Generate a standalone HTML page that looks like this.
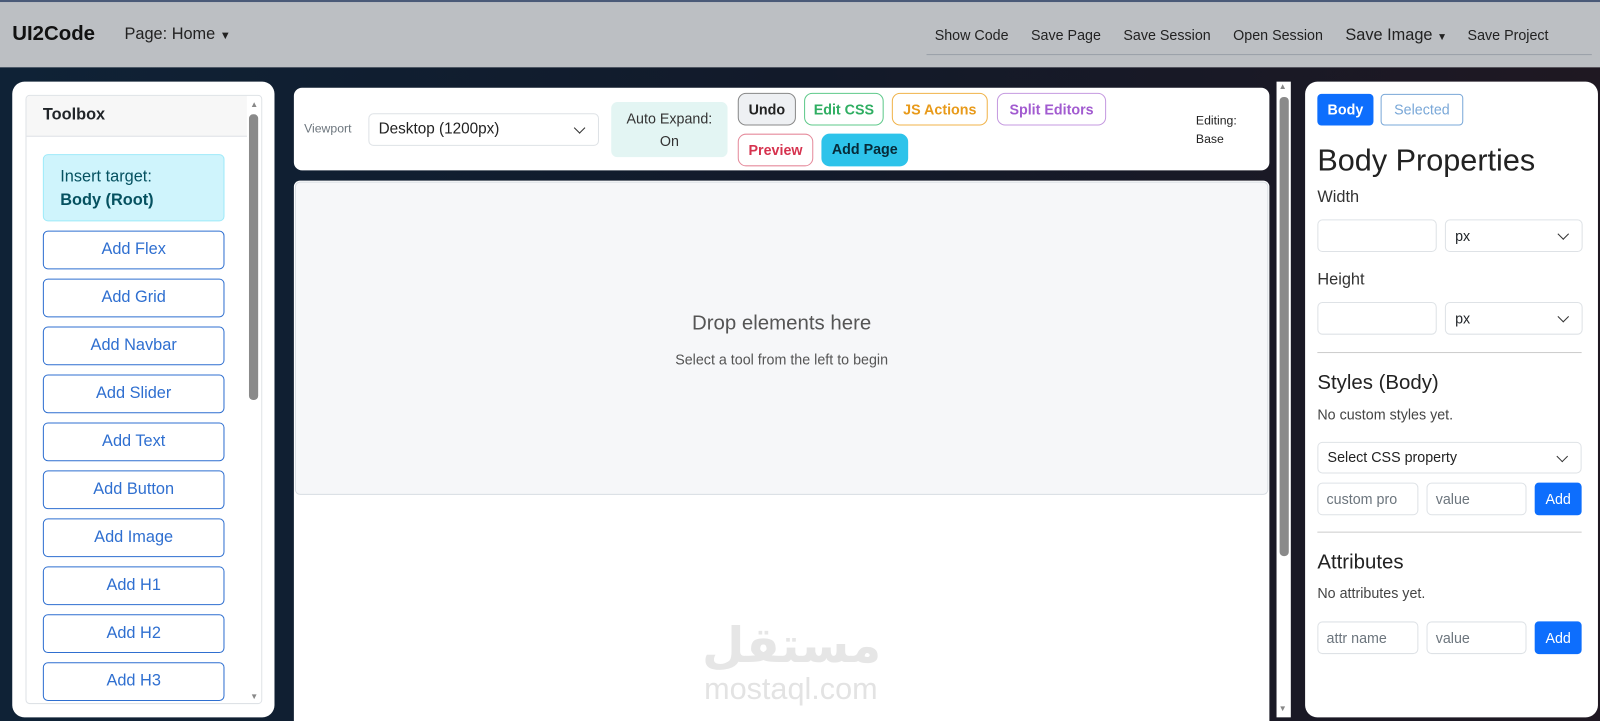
<!DOCTYPE html>
<html><head><style>
*{box-sizing:border-box;margin:0;padding:0}
html,body{width:1600px;height:719px;overflow:hidden}
body{font-family:"Liberation Sans",sans-serif;background:linear-gradient(90deg,#0f2236 0%,#121a2a 50%,#1f1822 100%);color:#212529}
#w{position:absolute;left:0;top:0;width:1568px;height:705px;transform:scale(1.020408);transform-origin:0 0}
.nav{position:absolute;left:0;top:0;width:1568px;height:66px;background:#bcbfc3;border-top:2px solid #4a5a78}
.abs{position:absolute}
.panel{position:absolute;background:#fff;border-radius:12px}
.btn{position:absolute;left:42px;width:178px;height:38px;border:1px solid #2f6fd0;border-radius:5px;color:#2f6fd0;font-size:16px;text-align:center;line-height:36px}
.tb{position:absolute;border-radius:8px;font-size:14px;font-weight:bold;text-align:center;height:32px;line-height:30px}
.inp{position:absolute;border:1px solid #dee2e6;border-radius:5px;height:32px;font-size:14px;color:#6c757d;padding-left:8px;line-height:30px;background:#fff}
.sel{position:absolute;border:1px solid #dee2e6;border-radius:5px;background:#fff;font-size:14px;padding-left:9px}
.chev{position:absolute;right:14px;top:50%;width:8px;height:8px;border-right:1.6px solid #333;border-bottom:1.6px solid #333;transform:translateY(-70%) rotate(45deg)}
</style></head><body><div id="w">
<div class="nav">
<div class="abs" style="left:12px;top:20px;font-size:20px;font-weight:bold;color:#111">UI2Code</div>
<div class="abs" style="left:122px;top:23px;font-size:16px;color:#222">Page: Home <span style="font-size:11px">▼</span></div>
<div class="abs" style="left:916px;top:24px;font-size:14px;color:#222;white-space:nowrap">
<span>Show Code</span><span style="margin-left:22px">Save Page</span><span style="margin-left:22px">Save Session</span><span style="margin-left:22px">Open Session</span><span style="margin-left:22px;font-size:16px">Save Image <span style="font-size:10px">▼</span></span><span style="margin-left:20px">Save Project</span></div>
<div class="abs" style="left:908px;top:51px;width:652px;height:1px;background:#9aa0a8"></div>
</div>

<div class="panel" style="left:12px;top:80px;width:257px;height:623px">
<div class="abs" style="left:13px;top:13px;width:232px;height:597px;border:1px solid #dee2e6;border-radius:4px;overflow:hidden">
<div style="height:40px;background:#f7f7f7;border-bottom:1px solid #dee2e6;width:218px;padding:10px 16px;font-weight:bold;font-size:16px">Toolbox</div>
<div class="abs" style="right:0;top:0;width:14px;height:597px;background:#fff"></div>
<div class="abs" style="right:3px;top:4px;font-size:8px;color:#888">▲</div>
<div class="abs" style="right:3px;top:18px;width:9px;height:280px;background:#8a8a8a;border-radius:4px"></div>
<div class="abs" style="right:3px;bottom:2px;font-size:8px;color:#888">▼</div>
</div>
<div class="abs" style="left:30px;top:71px;width:178px;height:66px;background:#cff4fc;border:1px solid #9eeaf9;border-radius:5px;padding:10px 16px;color:#055160;font-size:16px;line-height:23px">Insert target:<br><b>Body (Root)</b></div>
</div>
<div class="btn" style="top:226px">Add Flex</div>
<div class="btn" style="top:273px">Add Grid</div>
<div class="btn" style="top:320px">Add Navbar</div>
<div class="btn" style="top:367px">Add Slider</div>
<div class="btn" style="top:414px">Add Text</div>
<div class="btn" style="top:461px">Add Button</div>
<div class="btn" style="top:508px">Add Image</div>
<div class="btn" style="top:555px">Add H1</div>
<div class="btn" style="top:602px">Add H2</div>
<div class="btn" style="top:649px">Add H3</div>

<div class="panel" style="left:288px;top:86px;width:956px;height:81px;border-radius:8px">
<div class="abs" style="left:10px;top:33px;font-size:12px;color:#6c757d">Viewport</div>
<div class="sel" style="left:73px;top:25px;width:226px;height:32px;line-height:30px;font-size:15px;color:#222">Desktop (1200px)<span class="chev"></span></div>
<div class="abs" style="left:311px;top:14px;width:114px;height:54px;background:#e3f5f3;border-radius:6px;text-align:center;font-size:14px;line-height:22px;padding-top:5px;color:#333">Auto Expand:<br>On</div>
<div class="tb" style="left:435px;top:5px;width:57px;background:#eef0f3;border:1px solid #888;color:#222">Undo</div>
<div class="tb" style="left:500px;top:5px;width:78px;border:1px solid #5ec98a;color:#2fae62">Edit CSS</div>
<div class="tb" style="left:586px;top:5px;width:94px;border:1px solid #f0b34a;color:#e89a1a">JS Actions</div>
<div class="tb" style="left:689px;top:5px;width:107px;border:1px solid #c59ae0;color:#a25bd0">Split Editors</div>
<div class="tb" style="left:435px;top:45px;width:74px;border:1px solid #e58a9b;color:#d6334f">Preview</div>
<div class="tb" style="left:517px;top:45px;width:85px;background:#2dc3ea;color:#062a38">Add Page</div>
<div class="abs" style="left:884px;top:23px;font-size:12px;line-height:18px;color:#222">Editing:<br>Base</div>
</div>

<div class="abs" style="left:288px;top:177px;width:956px;height:530px;background:#fff;border-radius:6px 6px 0 0">
<div class="abs" style="left:1px;top:1px;width:954px;height:307px;background:#f6f7f9;border:1px solid #d8dde3;border-radius:5px">
<div class="abs" style="left:0;width:952px;top:127px;text-align:center;font-size:20px;color:#555">Drop elements here</div>
<div class="abs" style="left:0;width:952px;top:165px;text-align:center;font-size:14px;color:#555">Select a tool from the left to begin</div>
</div>
<div class="abs" style="left:400px;top:428px;font-size:48px;font-weight:bold;color:#e6e6e6;font-family:'DejaVu Sans',sans-serif">مستقل</div>
<div class="abs" style="left:402px;top:482px;font-size:30px;color:#e3e3e3">mostaql.com</div>
</div>

<div class="abs" style="left:1251px;top:80px;width:14px;height:623px;background:#fff"></div>
<div class="abs" style="left:1253px;top:80px;font-size:8px;color:#888">▲</div>
<div class="abs" style="left:1254px;top:95px;width:9px;height:450px;background:#8a8a8a;border-radius:4px"></div>
<div class="abs" style="left:1253px;top:690px;font-size:8px;color:#888">▼</div>

<div class="panel" style="left:1279px;top:80px;width:287px;height:623px">
<div class="abs" style="left:12px;top:12px;width:55px;height:31px;background:#0d6efd;border-radius:4px;color:#fff;font-size:14px;font-weight:bold;text-align:center;line-height:31px">Body</div>
<div class="abs" style="left:74px;top:12px;width:81px;height:31px;border:1px solid #7aa8d8;border-radius:4px;color:#7aa8d8;font-size:14px;text-align:center;line-height:29px">Selected</div>
<div class="abs" style="left:12px;top:61px;font-size:30px;color:#222">Body Properties</div>
<div class="abs" style="left:12px;top:105px;font-size:16px;color:#333">Width</div>
<div class="inp" style="left:12px;top:135px;width:117px"></div>
<div class="sel" style="left:137px;top:135px;width:135px;height:32px;line-height:30px">px<span class="chev"></span></div>
<div class="abs" style="left:12px;top:186px;font-size:16px;color:#333">Height</div>
<div class="inp" style="left:12px;top:216px;width:117px"></div>
<div class="sel" style="left:137px;top:216px;width:135px;height:32px;line-height:30px">px<span class="chev"></span></div>
<div class="abs" style="left:12px;top:265px;width:259px;height:1px;background:#ccc"></div>
<div class="abs" style="left:12px;top:284px;font-size:20px;color:#222">Styles (Body)</div>
<div class="abs" style="left:12px;top:318px;font-size:14px;color:#444">No custom styles yet.</div>
<div class="sel" style="left:12px;top:353px;width:259px;height:31px;line-height:29px;color:#222">Select CSS property<span class="chev"></span></div>
<div class="inp" style="left:12px;top:393px;width:99px">custom pro</div>
<div class="inp" style="left:119px;top:393px;width:98px">value</div>
<div class="abs" style="left:225px;top:393px;width:46px;height:32px;background:#0d6efd;border-radius:4px;color:#fff;font-size:14px;text-align:center;line-height:32px">Add</div>
<div class="abs" style="left:12px;top:441px;width:259px;height:1px;background:#ccc"></div>
<div class="abs" style="left:12px;top:460px;font-size:20px;color:#222">Attributes</div>
<div class="abs" style="left:12px;top:493px;font-size:14px;color:#444">No attributes yet.</div>
<div class="inp" style="left:12px;top:529px;width:99px">attr name</div>
<div class="inp" style="left:119px;top:529px;width:98px">value</div>
<div class="abs" style="left:225px;top:529px;width:46px;height:32px;background:#0d6efd;border-radius:4px;color:#fff;font-size:14px;text-align:center;line-height:32px">Add</div>
</div>
</div></body></html>
